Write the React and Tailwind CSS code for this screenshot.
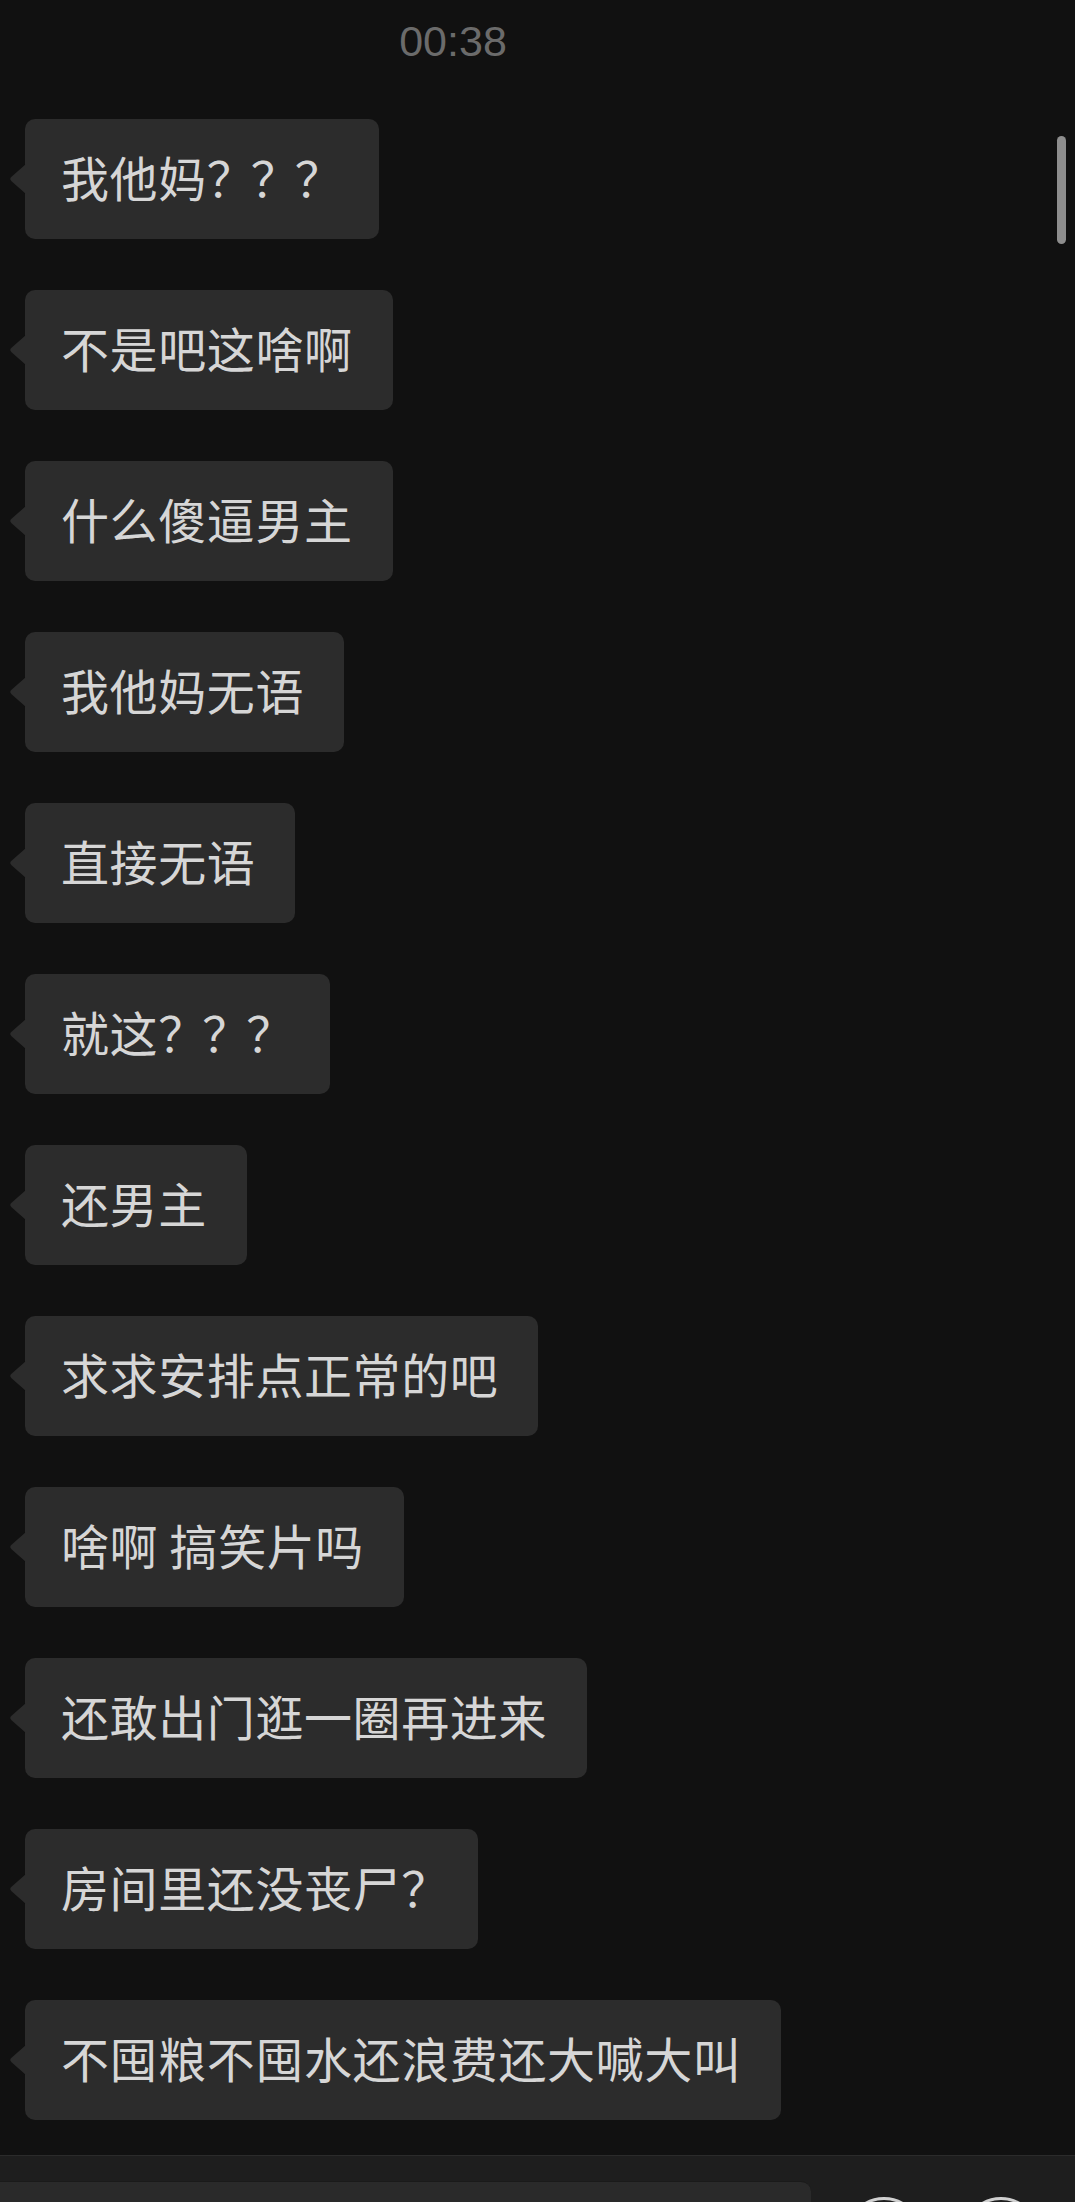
const messages = [
  { text: '我他妈', marks: '？？？' },
  { text: '不是吧这啥啊' },
  { text: '什么傻逼男主' },
  { text: '我他妈无语' },
  { text: '直接无语' },
  { text: '就这', marks: '？？？' },
  { text: '还男主' },
  { text: '求求安排点正常的吧' },
  { text: '啥啊 搞笑片吗' },
  { text: '还敢出门逛一圈再进来' },
  { text: '房间里还没丧尸', marks: '？', tight: true },
  { text: '不囤粮不囤水还浪费还大喊大叫' },
]

function Bubble({ text, marks, tight }) {
  return (
    <div className="relative flex h-[120px] items-center rounded-[10px] bg-[#2c2c2c] pl-[36px] pr-[40px]">
      <svg
        className="absolute left-[-16px] top-1/2 -translate-y-1/2"
        width="17"
        height="30"
        viewBox="0 0 17 30"
      >
        <path d="M17 0 L2.5 12.8 Q0 15 2.5 17.2 L17 30 Z" fill="#2c2c2c" />
      </svg>
      <span className="-mt-[6px] whitespace-nowrap text-[48px] leading-none tracking-[0.6px] text-[#d6d6d6]">
        {text}
        {marks && (
          <span className={tight ? 'tracking-[-11px]' : 'tracking-[-4px]'}>{marks}</span>
        )}
      </span>
    </div>
  )
}

export default function App() {
  return (
    <div className="relative flex h-[2202px] w-[1075px] flex-col overflow-hidden bg-[#111111] font-['Noto_Sans_CJK_SC',sans-serif]">
      <div className="flex h-[119px] w-[906px] justify-center pt-[20px]">
        <span className="font-['Liberation_Sans',sans-serif] text-[43px] leading-none text-[#6b6b6b]">
          00:38
        </span>
      </div>

      <div className="flex flex-1 flex-col items-start gap-[51px] pl-[25px]">
        {messages.map((m, i) => (
          <Bubble key={i} {...m} />
        ))}
      </div>

      <div className="flex h-[47px] shrink-0 items-start gap-[35px] border-t border-[#2b2b2b] bg-[#1e1e1e] pt-[25px]">
        <div className="-ml-[12px] h-[80px] w-[823px] shrink-0 rounded-[10px] border-t border-[#1a1a1a] bg-[#2a2a2a]" />
        <div className="flex gap-[41px] pt-[16px]">
          <div className="h-[76px] w-[76px] rounded-full border-[3px] border-[#d0d0d0]" />
          <div className="h-[76px] w-[76px] rounded-full border-[3px] border-[#d0d0d0]" />
        </div>
      </div>

      <div className="absolute left-[1057px] top-[136px] h-[108px] w-[9px] rounded-full bg-[#8e8e8e]" />
    </div>
  )
}
